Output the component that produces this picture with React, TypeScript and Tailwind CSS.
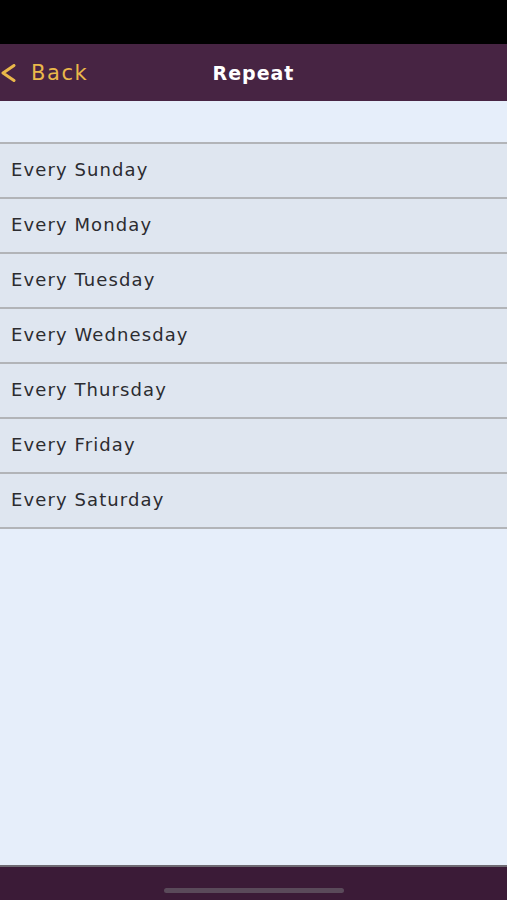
const days = ['Sunday', 'Monday', 'Tuesday', 'Wednesday', 'Thursday', 'Friday', 'Saturday'];

export default function App() {
  return (
    <div className="flex flex-col h-[900px] bg-[#e6eefa]" style={{ fontFamily: '"DejaVu Sans", Verdana, sans-serif' }}>
      <div className="h-[44px] bg-black" />
      <header className="relative h-[57px] bg-[#472443] flex items-center justify-center">
        <button className="absolute left-0 top-0 h-full flex items-center pt-[2px] text-[#eab84a]">
          <svg width="16" height="18" viewBox="0 0 16 18" className="-mt-[1px]">
            <path d="M14 1.5 L3 9 L14 16.5" fill="none" stroke="currentColor" strokeWidth="3" strokeLinecap="round" strokeLinejoin="round" />
          </svg>
          <span className="ml-[15px] text-[21px] tracking-[1.6px]">Back</span>
        </button>
        <h1 className="text-white text-[19px] font-bold tracking-[1px] pt-[1px]">Repeat</h1>
      </header>
      <div className="h-[41px]" />
      <ul className="border-t-2 border-[#b2b4b8]">
        {days.map(d => (
          <li key={d} className="h-[55px] bg-[#dfe6f0] border-b-2 border-[#b2b4b8] flex items-center pl-[11px] pb-[3px] text-[18px] text-[#2c2c30] tracking-[1.1px]">
            Every {d}
          </li>
        ))}
      </ul>
      <div className="flex-1" />
      <footer className="h-[35px] bg-[#3b1b37] border-t-2 border-[#6e6a72] flex justify-center">
        <div className="mt-[21px] w-[180px] h-[5px] rounded-full bg-[#5a4a5a]" />
      </footer>
    </div>
  );
}
